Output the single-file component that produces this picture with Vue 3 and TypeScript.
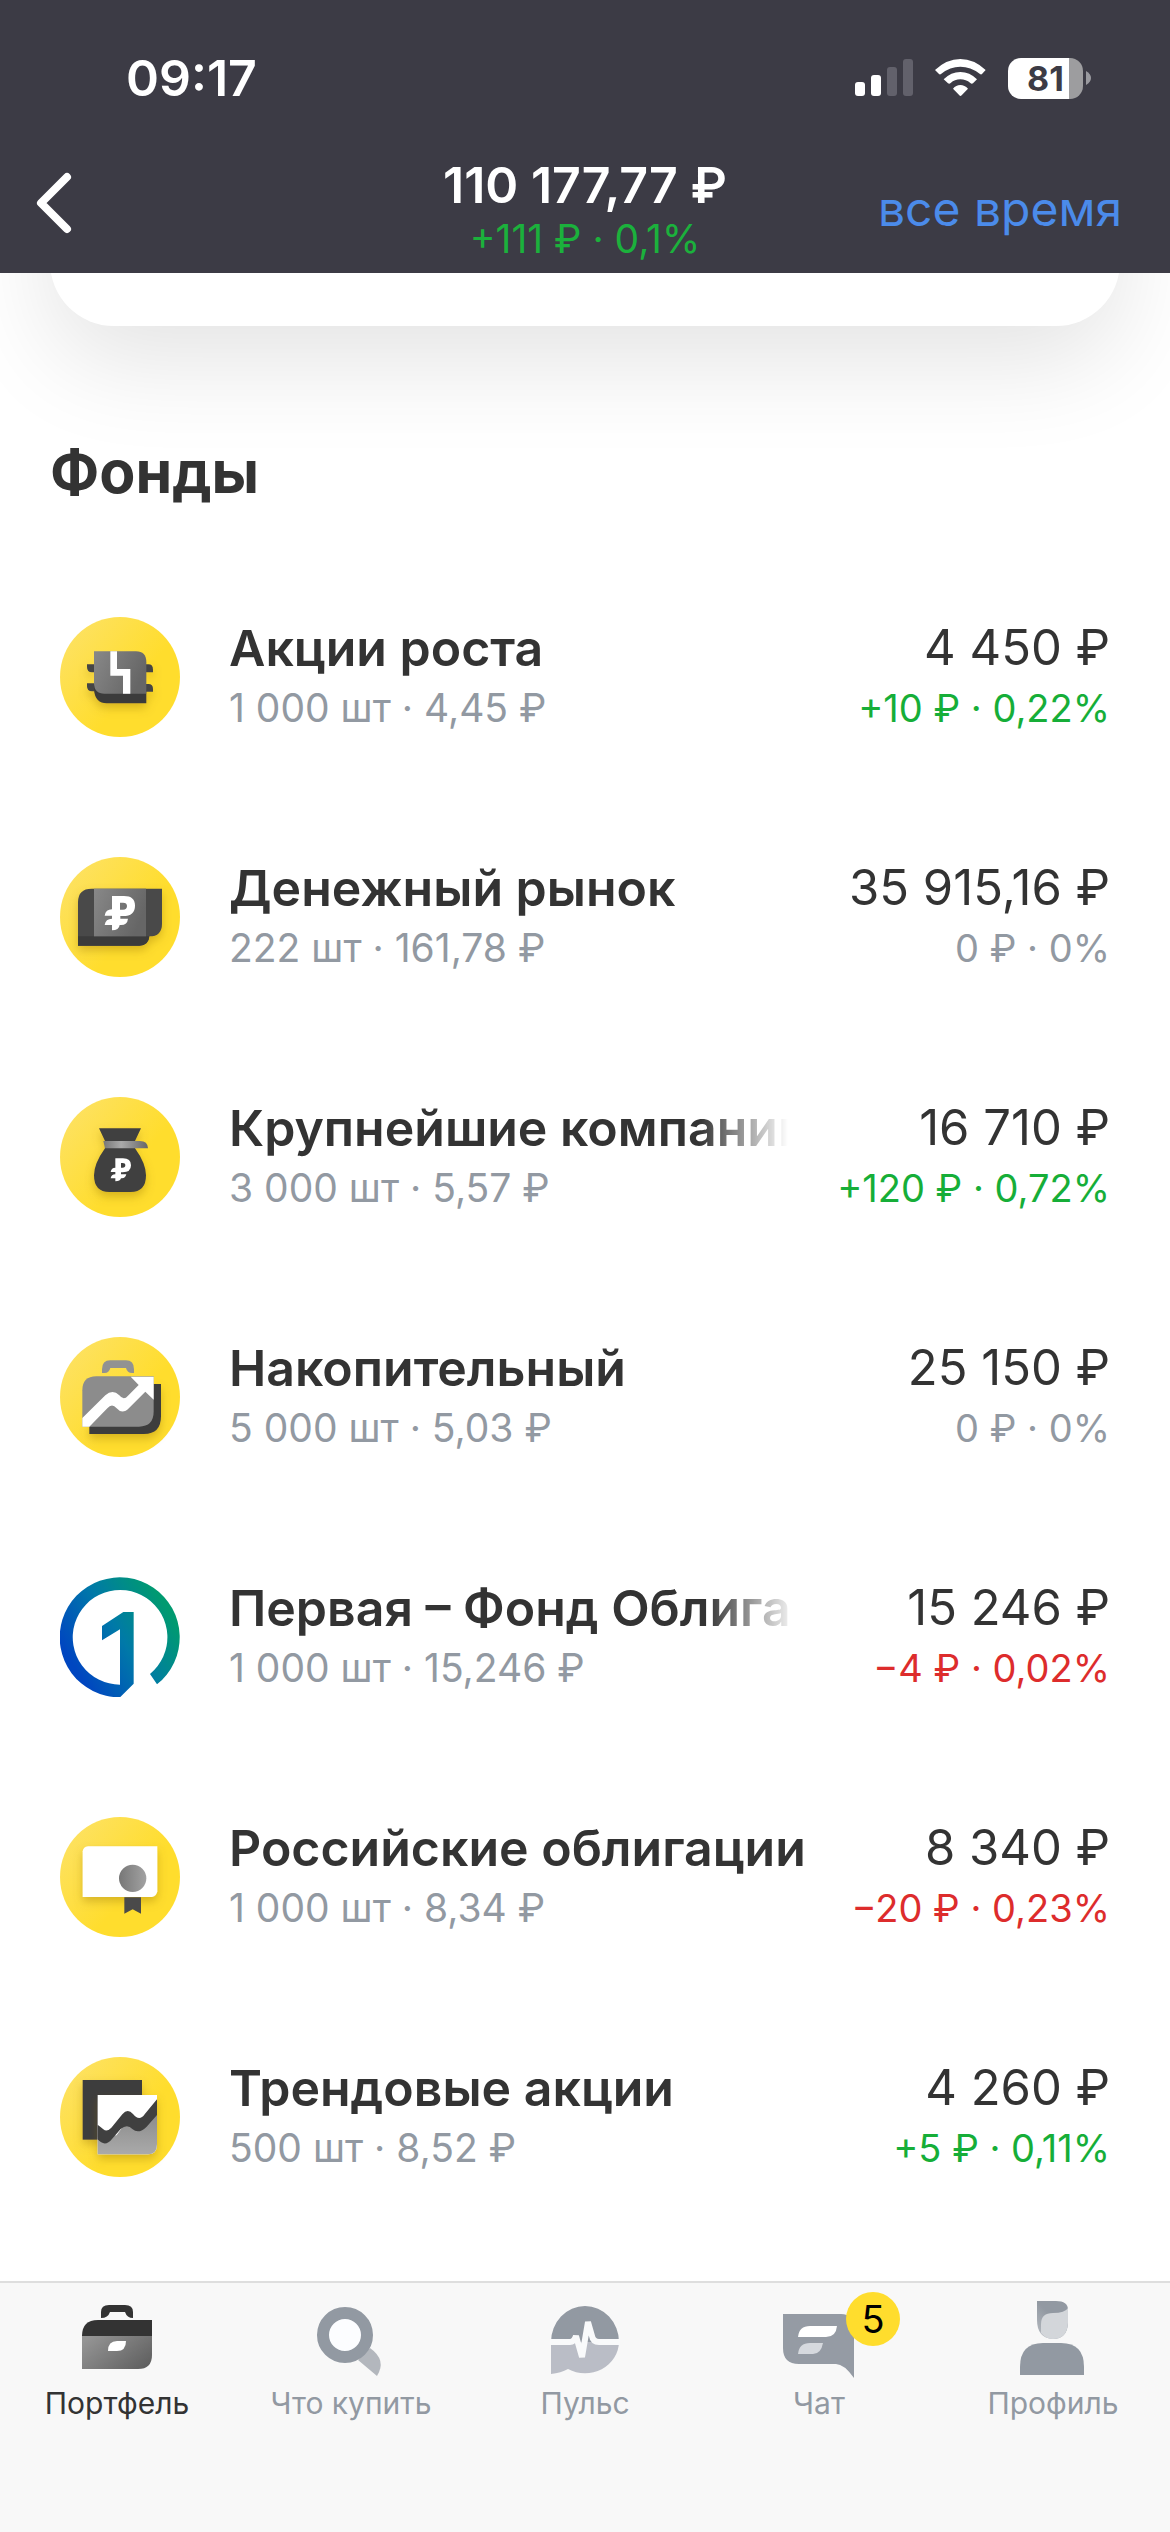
<script setup lang="ts">
type Trend = 'up' | 'down' | 'flat'
type FundIcon = 'growth' | 'money' | 'bag' | 'savings' | 'first' | 'bonds' | 'trend'
type TabIcon = 'portfolio' | 'search' | 'pulse' | 'chat' | 'profile'

interface Fund {
  icon: FundIcon
  name: string
  details: string
  amount: string
  change: string
  trend: Trend
  clipped?: boolean
}

interface Tab {
  icon: TabIcon
  label: string
  badge?: number
}

const funds: Fund[] = [
  { icon: 'growth', name: 'Акции роста', details: '1 000 шт · 4,45 ₽', amount: '4 450 ₽', change: '+10 ₽ · 0,22%', trend: 'up' },
  { icon: 'money', name: 'Денежный рынок', details: '222 шт · 161,78 ₽', amount: '35 915,16 ₽', change: '0 ₽ · 0%', trend: 'flat' },
  { icon: 'bag', name: 'Крупнейшие компании', details: '3 000 шт · 5,57 ₽', amount: '16 710 ₽', change: '+120 ₽ · 0,72%', trend: 'up', clipped: true },
  { icon: 'savings', name: 'Накопительный', details: '5 000 шт · 5,03 ₽', amount: '25 150 ₽', change: '0 ₽ · 0%', trend: 'flat' },
  { icon: 'first', name: 'Первая – Фонд Облига', details: '1 000 шт · 15,246 ₽', amount: '15 246 ₽', change: '−4 ₽ · 0,02%', trend: 'down', clipped: true },
  { icon: 'bonds', name: 'Российские облигации', details: '1 000 шт · 8,34 ₽', amount: '8 340 ₽', change: '−20 ₽ · 0,23%', trend: 'down' },
  { icon: 'trend', name: 'Трендовые акции', details: '500 шт · 8,52 ₽', amount: '4 260 ₽', change: '+5 ₽ · 0,11%', trend: 'up' },
]

const tabs: Tab[] = [
  { icon: 'portfolio', label: 'Портфель' },
  { icon: 'search', label: 'Что купить' },
  { icon: 'pulse', label: 'Пульс' },
  { icon: 'chat', label: 'Чат', badge: 5 },
  { icon: 'profile', label: 'Профиль' },
]
const activeTab: TabIcon = 'portfolio'
</script>

<template>
  <div class="screen">
    <svg class="defs" width="0" height="0" aria-hidden="true">
      <defs>
        <linearGradient id="gold" x1="0" y1="0.1" x2="0.6" y2="0.6">
          <stop offset="0" stop-color="#fde267" />
          <stop offset="1" stop-color="#ffdd2d" />
        </linearGradient>
        <linearGradient id="steel" x1="0" y1="0" x2="1" y2="0.4">
          <stop offset="0" stop-color="#888" />
          <stop offset="1" stop-color="#666" />
        </linearGradient>
        <linearGradient id="silver" x1="0" y1="0" x2="1" y2="0">
          <stop offset="0" stop-color="#777" />
          <stop offset="0.4" stop-color="#aaa" />
          <stop offset="1" stop-color="#666" />
        </linearGradient>
        <linearGradient id="seal" x1="0" y1="0" x2="1" y2="0">
          <stop offset="0" stop-color="#777" />
          <stop offset="1" stop-color="#a2a2a2" />
        </linearGradient>
        <linearGradient id="ash" x1="0" y1="0" x2="0" y2="1">
          <stop offset="0" stop-color="#888" />
          <stop offset="1" stop-color="#aaa" />
        </linearGradient>
        <linearGradient id="case" x1="0" y1="0.2" x2="1" y2="0.8">
          <stop offset="0" stop-color="#949494" />
          <stop offset="1" stop-color="#606060" />
        </linearGradient>
        <linearGradient id="ocean" gradientUnits="userSpaceOnUse" x1="110" y1="360" x2="390" y2="190">
          <stop offset="0" stop-color="#0046c0" />
          <stop offset="0.5" stop-color="#0079a8" />
          <stop offset="1" stop-color="#009a70" />
        </linearGradient>
        <linearGradient id="hair" x1="0" y1="1" x2="0.8" y2="0">
          <stop offset="0" stop-color="#b9bdc3" />
          <stop offset="0.6" stop-color="#9299a2" />
        </linearGradient>
        <filter id="soft" x="-40%" y="-40%" width="180%" height="190%">
          <feDropShadow dx="0" dy="14" stdDeviation="14" flood-color="#8a6500" flood-opacity="0.34" />
        </filter>
      </defs>
    </svg>

    <header class="header">
      <div class="status">
        <time class="clock">09:17</time>
        <div class="indicators">
          <svg class="signal" viewBox="0 0 58 38" aria-hidden="true">
            <rect x="0" y="23" width="10" height="14" rx="3" fill="#fff" />
            <rect x="16" y="16" width="10" height="21" rx="3" fill="#fff" />
            <rect x="32" y="8" width="10" height="29" rx="3" fill="#62616b" />
            <rect x="48" y="0" width="10" height="37" rx="3" fill="#62616b" />
          </svg>
          <svg class="wifi" viewBox="348 86 153 114" aria-hidden="true">
            <g fill="#fff">
              <path d="M348 119Q383 86 424 86T500 119L489 131Q486 134 482 130Q455 109 424 109T367 130Q363 134 360 131Z" />
              <path d="M374 147Q396 125 424 125T474 147L462 159Q458 162 454 158Q441 147 424 147T395 158Q391 162 387 159Z" />
              <path d="M402 175Q411 164 424 164T447 175L428 195Q424 199 421 195Z" />
            </g>
          </svg>
          <div class="battery">
            <span class="level">81</span>
            <svg class="pin" viewBox="0 0 5 14" aria-hidden="true"><path d="M0 0Q5 3 5 7T0 14Z" fill="#9a9a9f" /></svg>
          </div>
        </div>
      </div>
      <div class="bar">
        <button class="back" type="button" aria-label="Назад">
          <svg viewBox="0 0 36 62" aria-hidden="true">
            <path d="M31 5L5 31L31 57" fill="none" stroke="#fff" stroke-width="8" stroke-linecap="round" stroke-linejoin="round" />
          </svg>
        </button>
        <div class="total">
          <h1 class="sum">110 177,77 ₽</h1>
          <p class="gain">+111 ₽ · 0,1%</p>
        </div>
        <button class="period" type="button">все время</button>
      </div>
    </header>

    <main class="content">
      <div class="card"></div>
      <h2 class="heading">Фонды</h2>
      <ul class="list">
        <li v-for="fund in funds" :key="fund.icon">
          <a class="row" href="#">
            <svg class="logo" viewBox="60 80 360 360" aria-hidden="true">
              <circle v-if="fund.icon !== 'first'" cx="240" cy="260" r="180" fill="url(#gold)" />

              <g v-if="fund.icon === 'growth'">
                <g filter="url(#soft)">
                  <path d="M141 222H163V246H156Q141 246 141 230ZM141 279H163V303H156Q141 303 141 288ZM318 222H325Q339 222 339 238V246H318ZM318 281H325Q339 281 339 296V304H318Z" fill="#444" />
                  <path d="M162 280L319 300V339H200Q166 339 162 300Z" fill="#3a3a3a" />
                </g>
                <path d="M162 183H288Q319 183 319 216V310H194Q162 310 162 277Z" fill="url(#steel)" />
                <path d="M211 183H231V236H271V310H249V256H211Z" fill="#fff" />
              </g>

              <g v-else-if="fund.icon === 'money'">
                <g filter="url(#soft)">
                  <path d="M114 216Q114 175 155 175H366V280Q366 318 328 318Q326 346 298 346H114Z" fill="#484848" />
                </g>
                <path d="M114 318H328Q326 346 298 346H114Z" fill="#3b3b3b" />
                <rect x="162" y="175" width="156" height="143" fill="url(#steel)" />
                <path fill-rule="evenodd" d="M216 197H252Q285 197 285 226Q285 257 249 257H241V265H264Q262 284 243 284H239Q237 300 216 300V284H194Q197 265 216 265V256H194Q197 237 216 237ZM240 217V238H249Q261 238 261 227Q261 217 249 217Z" fill="#fff" />
              </g>

              <g v-else-if="fund.icon === 'bag'">
                <path filter="url(#soft)" d="M177 174H303L285 212V234Q318 280 318 315Q318 365 272 365H208Q162 365 162 315Q162 280 195 234V212Z" fill="#404040" />
                <path d="M190 212H300Q323 212 324 234H195Z" fill="url(#silver)" />
                <path fill-rule="evenodd" d="M226 264H249Q273 264 273 285Q273 306 248 306H243V312H259Q256 324 246 324H243Q241 333 226 333V324H212Q214 312 226 312V305H212Q214 292 226 292ZM243 278V292H248Q256 292 256 285Q256 278 248 278Z" fill="#fff" />
              </g>

              <g v-else-if="fund.icon === 'savings'">
                <g filter="url(#soft)">
                  <path d="M148 340L335 221H363V318Q363 371 312 371H148Z" fill="#3d3d3d" />
                </g>
                <path d="M186 188V177Q186 150 211 150H258Q282 150 282 177V188H276Q262 188 258 173H211Q207 188 194 188Z" fill="#929292" />
                <path d="M127 240Q127 198 169 198H341V303Q341 349 297 349H127Z" fill="#8c8c8c" />
                <path d="M127 323L196 255Q218 235 238 255Q251 272 264 256L296 224L272 199H341V268L316 244L268 292Q247 314 230 294Q216 277 202 294L148 349H127Z" fill="#fff" />
              </g>

              <g v-else-if="fund.icon === 'first'" fill="url(#ocean)">
                <path d="M240 441A180 180 0 1 1 351 402L330 371A142 142 0 1 0 240 403V237L186 270V227L250 185H281V400Z" />
              </g>

              <g v-else-if="fund.icon === 'bonds'">
                <g filter="url(#soft)">
                  <path d="M128 183Q130 169 144 168H352V303Q350 317 336 320H128Z" fill="#fff" />
                </g>
                <circle cx="278" cy="264" r="41" fill="url(#seal)" />
                <path d="M253 321H303V370L278 357L253 370Z" fill="#4a4a4a" />
              </g>

              <g v-else>
                <rect filter="url(#soft)" x="128" y="149" width="178" height="179" fill="#3e3e3e" />
                <path filter="url(#soft)" d="M173 194H351V342Q351 372 324 372H173Z" fill="#fff" />
                <path d="M173 320L230 315L262 270L300 285L351 240V342Q351 372 324 372H173Z" fill="url(#ash)" />
                <path d="M173 284Q178 286 190 297Q201 306 214 292L247 252Q263 233 279 251Q298 275 314 252L351 207V254L320 289Q296 313 277 296Q262 279 242 296L216 326Q195 352 173 327Z" fill="#404040" />
              </g>
            </svg>
            <div class="info">
              <span class="name" :class="{ clipped: fund.clipped }">{{ fund.name }}</span>
              <span class="details">{{ fund.details }}</span>
            </div>
            <div class="value">
              <span class="amount">{{ fund.amount }}</span>
              <span class="change" :class="fund.trend">{{ fund.change }}</span>
            </div>
          </a>
        </li>
      </ul>
    </main>

    <nav class="tabs">
      <a v-for="tab in tabs" :key="tab.icon" class="tab" :class="{ active: tab.icon === activeTab }" href="#">
        <span class="glyph">
          <svg viewBox="0 0 80 80" aria-hidden="true">
            <g v-if="tab.icon === 'portfolio'">
              <path d="M24 18V12Q24 5 32 5H48Q56 5 56 12V18Q50 18 48 12H33Q31 18 24 18Z" fill="#333" />
              <path d="M5 36Q5 20 21 20H75V37H5Z" fill="#333" />
              <path d="M5 36H75V55Q75 69 61 69H5Z" fill="url(#case)" />
              <path d="M31 51Q31 41 40 41H49Q49 51 40 51Z" fill="#fff" />
            </g>
            <g v-else-if="tab.icon === 'search'">
              <path d="M47 60L59 48Q76 60 66 76Z" fill="#b3b7bd" />
              <circle cx="34" cy="35" r="22" fill="#fcfdff" stroke="#9299a2" stroke-width="12" />
            </g>
            <g v-else-if="tab.icon === 'pulse'">
              <path d="M6 42A34 36 0 0 1 74 42Z" fill="#9299a2" />
              <path d="M6 42H74A34 32 0 0 1 23 69Q16 73 6 74Z" fill="#babdc6" />
              <path d="M5 42H25Q29 42 31 36L37 57L43 22L47 36Q48 42 54 42H75" fill="none" stroke="#f9fafb" stroke-width="6" stroke-linejoin="bevel" />
            </g>
            <g v-else-if="tab.icon === 'chat'">
              <path d="M4 14H62Q75 14 75 28V78Q65 64 57 64H20Q4 64 4 48Z" fill="#959ba4" />
              <path d="M19 37Q20 26 31 26H58Q57 37 47 37Z" fill="#fff" />
              <path d="M19 54Q20 43 31 43H44Q42 54 34 54Z" fill="#d6d9de" />
            </g>
            <g v-else>
              <path d="M24 1H43Q55 1 55 10V23Q54 39 40 39Q24 38 24 20Z" fill="url(#hair)" />
              <path d="M28 24Q28 13 40 13Q52 13 55 8V23Q54 39 40 39Q33 39 28 33Z" fill="#d3d6da" />
              <path d="M7 75V67Q7 43 30 43H48Q71 43 71 67V75Z" fill="#9299a2" />
            </g>
          </svg>
          <span v-if="tab.badge" class="badge">{{ tab.badge }}</span>
        </span>
        <span class="label">{{ tab.label }}</span>
      </a>
    </nav>
  </div>
</template>

<style>
body {
  margin: 0;
  background: #fff;
}
</style>

<style scoped>
.screen {
  display: flex;
  flex-direction: column;
  min-height: 100vh;
  background: #fff;
  color: #333;
  font-family: Inter, "Liberation Sans", sans-serif;
}

.defs {
  position: absolute;
}

h1,
h2,
p,
ul {
  margin: 0;
  padding: 0;
}

a {
  color: inherit;
  text-decoration: none;
}

button {
  padding: 0;
  border: 0;
  background: none;
  font: inherit;
}

.header {
  position: sticky;
  top: 0;
  z-index: 1;
  background: #3c3b45;
}

.status {
  display: flex;
  align-items: center;
  justify-content: space-between;
  height: 156px;
  padding: 0 79px 0 126px;
}

.clock {
  color: #fff;
  font-size: 50px;
  font-weight: 600;
}

.indicators {
  display: flex;
  align-items: center;
  gap: 22px;
}

.signal {
  width: 58px;
  height: 38px;
}

.wifi {
  width: 51px;
  height: 38px;
}

.battery {
  display: flex;
  align-items: center;
  gap: 3px;
}

.level {
  display: flex;
  align-items: center;
  justify-content: center;
  width: 75px;
  height: 41px;
  border-radius: 13px;
  background: linear-gradient(90deg, #fff 81%, #9d9d9f 81%);
  color: #3c3b45;
  font-size: 34px;
  font-weight: 700;
}

.pin {
  width: 5px;
  height: 14px;
}

.bar {
  display: grid;
  grid-template-columns: 1fr auto 1fr;
  align-items: center;
  height: 112px;
  padding: 0 48px 5px 36px;
}

.back {
  justify-self: start;
  width: 36px;
  height: 62px;
  margin-bottom: 18px;
}

.back svg {
  display: block;
}

.total {
  padding-left: 12px;
  text-align: center;
}

.sum {
  color: #fff;
  font-size: 50px;
  font-weight: 600;
  line-height: 53px;
}

.gain {
  color: #1bb13c;
  font-size: 39px;
  line-height: 53px;
}

.period {
  justify-self: end;
  margin-bottom: 8px;
  color: #4b8bea;
  font-size: 48px;
}

.content {
  overflow: hidden;
}

.card {
  height: 200px;
  margin: -147px 50px 0;
  border-radius: 64px;
  background: #fff;
  box-shadow: 0 36px 100px rgba(0, 0, 0, 0.11);
}

.heading {
  margin: 110px 50px 49px;
  font-size: 59px;
  font-weight: 700;
  line-height: 72px;
}

.list {
  list-style: none;
}

.row {
  display: flex;
  align-items: center;
  gap: 49px;
  height: 240px;
  padding: 0 60px;
}

.logo {
  flex: none;
  width: 120px;
  height: 120px;
}

.info {
  display: flex;
  flex: 1;
  flex-direction: column;
  min-width: 0;
  padding-top: 2px;
}

.name {
  font-size: 50px;
  font-weight: 600;
  line-height: 60px;
  white-space: nowrap;
}

.clipped {
  max-width: 568px;
  overflow: hidden;
  mask-image: linear-gradient(90deg, #000 84%, transparent);
}

.details {
  color: #9299a2;
  font-size: 39px;
  line-height: 60px;
}

.value {
  display: flex;
  flex-direction: column;
  padding-top: 2px;
  text-align: right;
  white-space: nowrap;
}

.amount {
  font-size: 49px;
  line-height: 60px;
}

.change {
  font-size: 38px;
  line-height: 60px;
}

.up {
  color: #16ae38;
}

.down {
  color: #dd2c2c;
}

.flat {
  color: #9299a2;
}

.tabs {
  display: grid;
  grid-template-columns: repeat(5, 1fr);
  height: 249px;
  margin-top: auto;
  border-top: 2px solid #dedede;
  background: #f8f8f8;
}

.tab {
  display: flex;
  flex-direction: column;
  align-items: center;
  gap: 5px;
  padding-top: 17px;
  color: #9299a2;
}

.active {
  color: #333;
}

.glyph {
  position: relative;
  width: 80px;
  height: 80px;
}

.badge {
  position: absolute;
  top: -8px;
  left: 67px;
  width: 54px;
  height: 54px;
  border-radius: 50%;
  background: #ffdd2d;
  color: #000;
  font-size: 38px;
  line-height: 54px;
  text-align: center;
}

.label {
  font-size: 30px;
  line-height: 36px;
  white-space: nowrap;
}
</style>
